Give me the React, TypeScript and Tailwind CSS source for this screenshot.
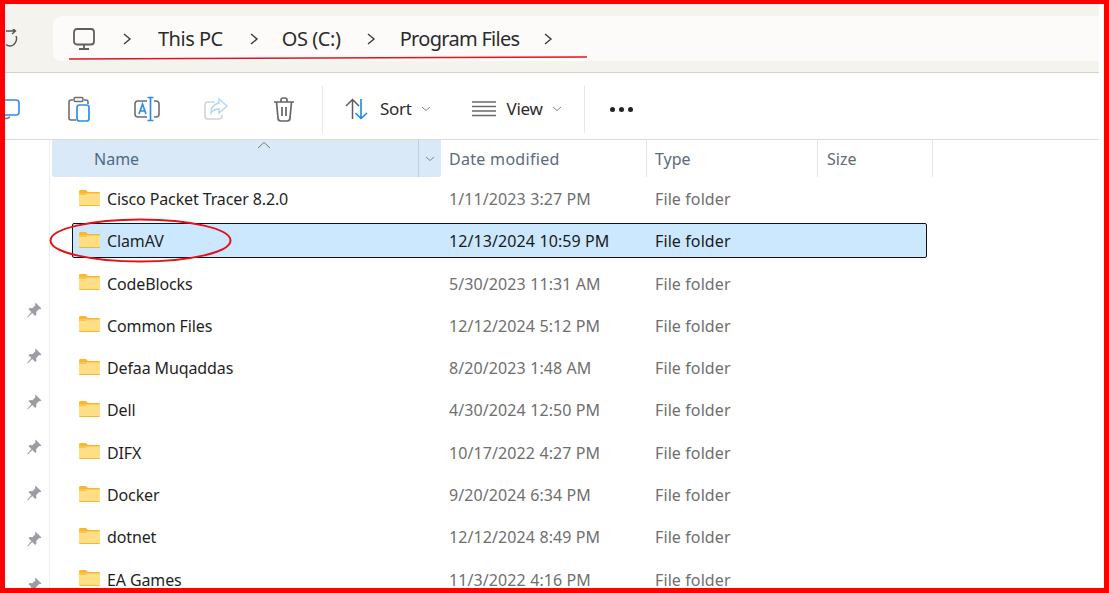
import React from 'react';

interface FileRow {
  name: string;
  date: string;
  selected?: boolean;
}

const rows: FileRow[] = [
  { name: 'Cisco Packet Tracer 8.2.0', date: '1/11/2023 3:27 PM' },
  { name: 'ClamAV', date: '12/13/2024 10:59 PM', selected: true },
  { name: 'CodeBlocks', date: '5/30/2023 11:31 AM' },
  { name: 'Common Files', date: '12/12/2024 5:12 PM' },
  { name: 'Defaa Muqaddas', date: '8/20/2023 1:48 AM' },
  { name: 'Dell', date: '4/30/2024 12:50 PM' },
  { name: 'DIFX', date: '10/17/2022 4:27 PM' },
  { name: 'Docker', date: '9/20/2024 6:34 PM' },
  { name: 'dotnet', date: '12/12/2024 8:49 PM' },
  { name: 'EA Games', date: '11/3/2022 4:16 PM' },
];

const FolderIcon = () => (
  <svg width="22" height="18" viewBox="0 0 22 18" className="shrink-0 -mt-[3px]">
    <path d="M0 2.5C0 1.6.6 1 1.5 1H7l2.5 2.500H0Z" fill="#fbb829" />
    <rect x="0" y="3" width="21" height="14" rx="1" fill="#f7b733" />
    <rect x="0" y="4.500" width="21" height="11.500" fill="#ffdf85" />
    <path d="M0 4.500h8.500L6.800 6H0Z" fill="#f9c44d" />
  </svg>
);

const Chevron = () => (
  <svg width="12" height="14" viewBox="0 0 12 14" fill="none" stroke="#3b3b3b" strokeWidth="1.400">
    <path d="M3 2l6 5-6 5" />
  </svg>
);

const SmallDown = () => (
  <svg width="10" height="6" viewBox="0 0 10 6" fill="none" stroke="#8a8a8a" strokeWidth="1">
    <path d="M1 1l4 3.500L9 1" />
  </svg>
);

const PinIcon = () => (
  <svg width="18" height="18" viewBox="0 0 18 18" fill="#9a9ea3">
    <path d="M10.500 1.500l6 6-1.300.8-1-.3-3 3 .2 2.700-1.200 1.200-2.900-2.900-4.300 4.300-1-.1 4.400-5.200L3.500 8.200l1.200-1.200 2.700.2 3-3-.3-1z" />
  </svg>
);

const App: React.FC = () => {
  return (
    <div className="relative w-[1109px] h-[593px] overflow-hidden bg-white border-solid border-[#ff0000] border-l-[5px] border-t-[4px] border-r-[5px] border-b-[5px] font-['Noto_Sans','Open_Sans',sans-serif]">
      <div className="flex flex-col w-[1094px] h-full">

        {/* Address bar */}
        <div className="flex items-center h-[69px] shrink-0 pt-[1px] bg-[#f5f3ee] border-b-[1.500px] border-[#d4d1c6]">
          <div className="w-[48px] shrink-0 flex items-center">
            <svg width="14" height="20" viewBox="0 0 14 20" fill="none" stroke="#555" strokeWidth="1.400">
              <path d="M1 2h9M7 -1l3.500 3L7 5M11 7c2 5-2 10-6 10-2 0-3-.5-4-1.500" />
            </svg>
          </div>
          <div className="flex-1 h-[45px] flex items-center bg-[#fcfbf9] rounded-l-[8px] text-[20px] text-[#2b2b2b]">
            <svg width="24" height="24" viewBox="0 0 24 24" fill="none" stroke="#5f5f5f" strokeWidth="1.800" className="ml-[19px]">
              <rect x="2" y="2" width="20" height="15.500" rx="3" />
              <path d="M12 18v3M7 22h10" />
            </svg>
            <span className="ml-[25px]"><Chevron /></span>
            <span className="ml-[25px] pt-[1px] tracking-[-0.5px]">This PC</span>
            <span className="ml-[25px]"><Chevron /></span>
            <span className="ml-[22px] pt-[1px] tracking-[-0.4px]">OS (C:)</span>
            <span className="ml-[24px]"><Chevron /></span>
            <span className="ml-[23px] pt-[1px] tracking-[-0.7px]">Program Files</span>
            <span className="ml-[23px]"><Chevron /></span>
          </div>
        </div>

        {/* Toolbar */}
        <div className="flex items-center h-[67px] shrink-0 pt-[6px] border-b-[1.500px] border-[#dedcd6] text-[17px] text-[#2b2b2b]">
          <svg width="16" height="24" viewBox="0 0 16 24" fill="none" className="shrink-0">
            <rect x="-6" y="3" width="20" height="15" rx="3" stroke="#2b8fe8" strokeWidth="1.600" />
            <path d="M5 20l-3 1.500H0" stroke="#777" strokeWidth="1.500" />
          </svg>
          <svg width="24" height="26" viewBox="0 0 24 26" fill="none" className="ml-[47px] shrink-0">
            <path d="M5 4H3a2 2 0 0 0-2 2v16a2 2 0 0 0 2 2h5M16 4h2a2 2 0 0 1 2 2v2" stroke="#6e6e6e" strokeWidth="1.600" />
            <rect x="6" y="1.500" width="9" height="4" rx="1.500" stroke="#6e6e6e" strokeWidth="1.500" />
            <rect x="9" y="9" width="12" height="16" rx="2.500" stroke="#2b8fe8" strokeWidth="1.700" />
          </svg>
          <svg width="26" height="26" viewBox="0 0 26 26" fill="none" className="ml-[42px] shrink-0">
            <path d="M13 5H4a3 3 0 0 0-3 3v10a3 3 0 0 0 3 3h9M20 5h2a3 3 0 0 1 3 3v10a3 3 0 0 1-3 3h-2" stroke="#6e6e6e" strokeWidth="1.600" />
            <path d="M16.500 2v22M13.500 1.500h6M13.500 24.500h6" stroke="#2b8fe8" strokeWidth="1.700" />
            <path d="M5 18l3.500-10L12 18M6.300 15h4.400" stroke="#2b8fe8" strokeWidth="1.700" />
          </svg>
          <svg width="24" height="24" viewBox="0 0 24 24" fill="none" className="ml-[44px] shrink-0">
            <path d="M11 5H4a3 3 0 0 0-3 3v11a3 3 0 0 0 3 3h11a3 3 0 0 0 3-3v-1" stroke="#d3d3d3" strokeWidth="1.600" />
            <path d="M15 2l8 7-8 7v-4c-4 0-6 1-8 4 0-6 3-9 8-10z" stroke="#b5d7f5" strokeWidth="1.500" />
          </svg>
          <svg width="22" height="25" viewBox="0 0 22 25" fill="none" stroke="#666" strokeWidth="1.700" className="ml-[45px] shrink-0">
            <path d="M1 5h20M8 5V3a2 2 0 0 1 2-2h2a2 2 0 0 1 2 2v2M3.500 5l1.500 16a3 3 0 0 0 3 3h6a3 3 0 0 0 3-3l1.500-16M9 10v9M13 10v9" />
          </svg>
          <div className="w-px h-[47px] bg-[#e8e6e1] ml-[27px] shrink-0" />
          <svg width="24" height="22" viewBox="0 0 24 22" fill="none" className="ml-[22px] shrink-0">
            <path d="M7.500 21V2M1 8l6.500-6.500L14 8" stroke="#5c5c5c" strokeWidth="1.500" />
            <path d="M16 1v19M10.500 15l5.500 5.500 6-5.500" stroke="#1e88e5" strokeWidth="1.600" />
          </svg>
          <span className="ml-[11px] tracking-[-0.3px]">Sort</span>
          <span className="ml-[9px] flex"><SmallDown /></span>
          <svg width="24" height="16" viewBox="0 0 24 16" stroke="#6a6a6a" strokeWidth="1.300" className="ml-[41px] shrink-0">
            <path d="M0 1h24M0 5.500h24M0 10h24M0 14.500h24" />
          </svg>
          <span className="ml-[11px] tracking-[-0.3px]">View</span>
          <span className="ml-[9px] flex"><SmallDown /></span>
          <div className="w-px h-[47px] bg-[#e8e6e1] ml-[22px] shrink-0" />
          <div className="flex gap-[4px] ml-[25px]">
            <span className="w-[5px] h-[5px] rounded-full bg-[#222]" />
            <span className="w-[5px] h-[5px] rounded-full bg-[#222]" />
            <span className="w-[5px] h-[5px] rounded-full bg-[#222]" />
          </div>
        </div>

        <div className="flex flex-1 min-h-0">
          {/* Navigation pane, mostly cropped */}
          <div className="w-[45px] shrink-0 border-r border-[#f0f0f0] flex flex-col">
            <div className="w-[30px] h-px bg-[#dcdcdc] mt-[125px]" />
            <div className="flex flex-col items-center gap-[27.800px] mt-[36px] pl-[13px]">
              {[0, 1, 2, 3, 4, 5, 6].map((i) => (
                <PinIcon key={i} />
              ))}
            </div>
          </div>

          {/* File list */}
          <div className="flex-1 pl-[2px] min-w-0">
            <div className="flex h-[37px] text-[16px] text-[#4f6a85]">
              <div className="relative w-[389px] shrink-0 flex bg-[#d9e9f8] rounded-b-[3px]">
                <span className="pl-[42px] pt-[7px] flex-1 border-r border-[#bcd0e2]">Name</span>
                <svg width="14" height="8" viewBox="0 0 14 8" fill="none" stroke="#777" className="absolute left-[205px] top-[1px]">
                  <path d="M1 7l6-5.500L13 7" />
                </svg>
                <span className="w-[22px] flex items-center justify-center"><SmallDown /></span>
              </div>
              <span className="w-[206px] shrink-0 pl-[8px] pt-[7px] border-r border-[#e6e6e6] text-[#5b6b7b] tracking-[0.3px]">Date modified</span>
              <span className="w-[171px] shrink-0 pl-[8px] pt-[7px] border-r border-[#e6e6e6] text-[#5b6b7b]">Type</span>
              <span className="w-[115px] shrink-0 pl-[9px] pt-[7px] border-r border-[#e6e6e6] text-[#5b6b7b]">Size</span>
            </div>

            <div className="flex flex-col gap-[7.300px] pt-[4px] w-[855px] ml-[20px]">
              {rows.map((row) => (
                <div
                  key={row.name}
                  className={`flex items-center h-[35px] pt-[1px] shrink-0 text-[16px] rounded-[2px] ${row.selected ? 'bg-[#cce8ff] border border-[#111] text-[#1a1a1a]' : 'border border-transparent text-[#6f6f6f]'}`}
                >
                  <span className="w-[376px] shrink-0 flex items-center pl-[6px] text-[#1f1f1f]">
                    <FolderIcon />
                    <span className="ml-[6px] tracking-[-0.12px]">{row.name}</span>
                  </span>
                  <span className="w-[206px] shrink-0 tracking-[0.1px]">{row.date}</span>
                  <span className="tracking-[0.1px]">File folder</span>
                </div>
              ))}
            </div>
          </div>
        </div>
      </div>

      {/* Red annotations drawn on top of the screenshot */}
      <svg width="1099" height="584" viewBox="0 0 1099 584" fill="none" className="absolute left-0 top-0 pointer-events-none">
        <path d="M64 55L582 53" stroke="#e8101a" strokeWidth="1.500" />
        <ellipse cx="135.500" cy="236.500" rx="90" ry="21" stroke="#e5101a" strokeWidth="2" />
      </svg>
    </div>
  );
};

export default App;
